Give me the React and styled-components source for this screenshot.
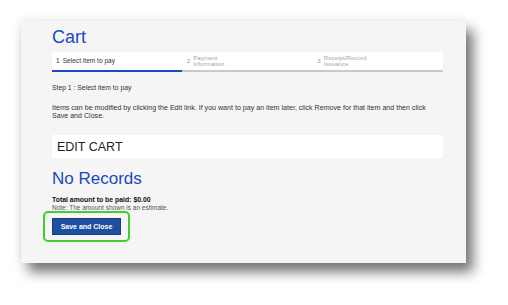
import React from 'react'
import styled, { createGlobalStyle } from 'styled-components'

const Global = createGlobalStyle`
  body {
    margin: 0;
    background: #ffffff;
    font-family: "Liberation Sans", Arial, sans-serif;
  }
`

const Page = styled.div`
  width: 508px;
  height: 305px;
  padding: 21px 0 0 21px;
  box-sizing: border-box;
`

const Panel = styled.section`
  width: 445px;
  height: 242px;
  box-sizing: border-box;
  padding: 6px 23px 0 31px;
  background: #f5f5f5;
  box-shadow: 7px 9px 12px rgba(0, 0, 0, 0.55), -2px -2px 8px rgba(0, 0, 0, 0.06);
`

const Title = styled.h1`
  margin: 0;
  font-size: 18px;
  line-height: 20px;
  font-weight: 400;
  color: #1a4ac0;
`

const Steps = styled.div`
  margin-top: 5px;
  display: flex;
  height: 18px;
  background: #fff;
  border-bottom: 2px solid #c9c9c9;
`

const Step = styled.div`
  flex: 1;
  display: flex;
  align-items: center;
  gap: 3px;
  padding-left: ${(p) => (p.$active ? '4px' : '5px')};
  margin-bottom: -2px;
  border-bottom: 2px solid ${(p) => (p.$active ? '#1a4ac0' : 'transparent')};
  font-size: ${(p) => (p.$active ? '6.6px' : '6.2px')};
  line-height: 6.5px;
  color: ${(p) => (p.$active ? '#333' : '#a8a8a8')};
`

const StepNum = styled.span`
  color: ${(p) => (p.$active ? '#333' : '#999')};
`

const StepText = styled.p`
  margin: 11px 0 0;
  font-size: 6.8px;
  line-height: 9px;
  color: #333;
`

const Info = styled.p`
  margin: 12px 0 0;
  max-width: 386px;
  font-size: 7.1px;
  line-height: 8px;
  color: #333;
`

const EditBox = styled.div`
  margin-top: 15px;
  height: 23px;
  background: #fff;
  display: flex;
  align-items: center;
  padding-left: 5px;
  font-size: 12.5px;
  color: #222;
`

const NoRecords = styled.h2`
  margin: 12px 0 0;
  font-size: 17px;
  line-height: 18px;
  font-weight: 400;
  color: #1a4ac0;
`

const Total = styled.div`
  margin-top: 8px;
  font-size: 6.9px;
  line-height: 8px;
  font-weight: 700;
  color: #111;
`

const Note = styled.div`
  font-size: 6.5px;
  line-height: 8px;
  color: #555;
`

const Ring = styled.div`
  display: inline-block;
  margin: -1px 0 0 -9px;
  padding: 5px 7px;
  border: 2px solid #3fcf2f;
  border-radius: 5px;
`

const Button = styled.button`
  display: block;
  width: 69px;
  height: 17px;
  border: 1px solid #163f8a;
  background: #1f4f9f;
  color: #fff;
  font-family: "Liberation Sans", Arial, sans-serif;
  font-weight: 700;
  font-size: 7px;
  padding: 0;
`

export default function App() {
  return (
    <Page>
      <Global />
      <Panel>
        <Title>Cart</Title>
        <Steps>
          <Step $active>
            <StepNum $active>1</StepNum> Select item to pay
          </Step>
          <Step>
            <StepNum>2</StepNum>
            <span>Payment<br />Information</span>
          </Step>
          <Step>
            <StepNum>3</StepNum>
            <span>Receipt/Record<br />Issuance</span>
          </Step>
        </Steps>
        <StepText>Step 1 : Select item to pay</StepText>
        <Info>
          Items can be modified by clicking the Edit link. If you want to pay an item later, click Remove for that item and then click Save and Close.
        </Info>
        <EditBox>EDIT CART</EditBox>
        <NoRecords>No Records</NoRecords>
        <Total>Total amount to be paid: $0.00</Total>
        <Note>Note: The amount shown is an estimate.</Note>
        <Ring>
          <Button>Save and Close</Button>
        </Ring>
      </Panel>
    </Page>
  )
}
